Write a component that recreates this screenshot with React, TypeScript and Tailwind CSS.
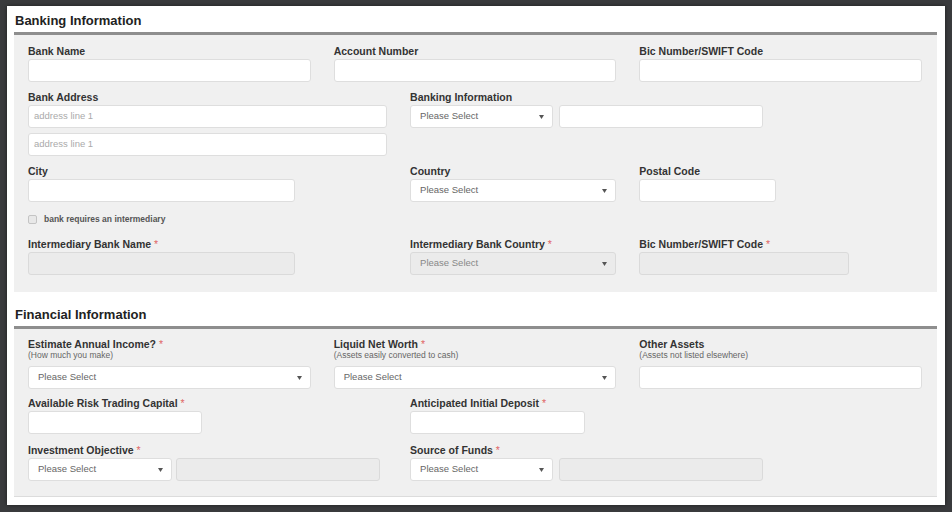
import React from "react";

function Label({ text, req, sub }: { text: string; req?: boolean; sub?: string }) {
  return (
    <div>
      <div className={sub ? "h-[12px] leading-[12px] text-[10.5px] font-bold text-[#333] whitespace-nowrap" : "h-[14px] leading-[14px] text-[10.5px] font-bold text-[#333] whitespace-nowrap"}>
        {text}
        {req && <span className="text-[#e06666] font-normal"> *</span>}
      </div>
      {sub && <div className="h-[11px] leading-[11px] text-[8.5px] text-[#666] whitespace-nowrap">{sub}</div>}
    </div>
  );
}

function Input({ w, disabled, placeholder }: { w?: string; disabled?: boolean; placeholder?: string }) {
  return (
    <div
      className={
        "h-[23px] rounded-[3px] border flex items-center pl-[5px] text-[9.5px] text-[#aaa] " +
        (disabled ? "bg-[#ebebeb] border-[#dadada] " : "bg-white border-[#dedede] ") +
        (w ?? "w-full")
      }
    >
      {placeholder}
    </div>
  );
}

function Select({ w, disabled }: { w?: string; disabled?: boolean }) {
  return (
    <div
      className={
        "h-[23px] rounded-[3px] border flex items-center justify-between pl-[9px] pr-[8px] text-[9.5px] " +
        (disabled ? "bg-[#ebebeb] border-[#dadada] text-[#888] " : "bg-white border-[#dedede] text-[#666] ") +
        (w ?? "w-full")
      }
    >
      <span>Please Select</span>
      <svg width="5" height="4" viewBox="0 0 5 4">
        <path d="M0 0 L5 0 L2.5 4 Z" fill="#555" />
      </svg>
    </div>
  );
}

function Heading({ text, top }: { text: string; top: string }) {
  return (
    <div>
      <div className={"pl-[1px] leading-[16px] text-[13px] font-bold text-[#222] " + top}>{text}</div>
      <div className="h-[3px] bg-[#8e8e8e]" />
    </div>
  );
}

export default function App() {
  return (
    <div className="w-[952px] h-[512px] overflow-hidden bg-[#3a3b3d] pt-[6px] pl-[7px] font-['Liberation_Sans',Arial,sans-serif]">
      <div className="w-[938px] h-[499px] bg-white pl-[7px] pr-[8px] shadow-[0_0_4px_rgba(0,0,0,0.5)]">
        <Heading text="Banking Information" top="pt-[7px] pb-[3px]" />
        <div className="bg-[#f0f0f0] pl-[14px] pr-[15px] pt-[9px] pb-[17px]">
          <div className="grid grid-cols-12 gap-x-[23px]">
            <div className="col-span-4">
              <Label text="Bank Name" />
              <div className="mt-[1px]"><Input /></div>
            </div>
            <div className="col-span-4">
              <Label text="Account Number" />
              <div className="mt-[1px]"><Input /></div>
            </div>
            <div className="col-span-4">
              <Label text="Bic Number/SWIFT Code" />
              <div className="mt-[1px]"><Input /></div>
            </div>
          </div>
          <div className="grid grid-cols-12 gap-x-[23px] mt-[8px]">
            <div className="col-span-5">
              <Label text="Bank Address" />
              <div className="mt-[1px]"><Input placeholder="address line 1" /></div>
              <div className="mt-[5px]"><Input placeholder="address line 1" /></div>
            </div>
            <div className="col-span-7">
              <Label text="Banking Information" />
              <div className="mt-[1px] flex gap-[6px]">
                <Select w="w-[143px]" />
                <Input w="w-[204px]" />
              </div>
            </div>
          </div>
          <div className="grid grid-cols-12 gap-x-[23px] mt-[8px]">
            <div className="col-span-5">
              <Label text="City" />
              <div className="mt-[1px]"><Input w="w-[267px]" /></div>
            </div>
            <div className="col-span-3">
              <Label text="Country" />
              <div className="mt-[1px]"><Select /></div>
            </div>
            <div className="col-span-4">
              <Label text="Postal Code" />
              <div className="mt-[1px]"><Input w="w-[137px]" /></div>
            </div>
          </div>
          <div className="mt-[10px] h-[14px] flex items-center gap-[7px]">
            <div className="w-[9px] h-[9px] rounded-[2px] border border-[#c4c4c4] bg-[#e8e8e8]" />
            <span className="text-[8.5px] font-bold text-[#555]">bank requires an intermediary</span>
          </div>
          <div className="grid grid-cols-12 gap-x-[23px] mt-[11px]">
            <div className="col-span-5">
              <Label text="Intermediary Bank Name" req />
              <div className="mt-[1px]"><Input w="w-[267px]" disabled /></div>
            </div>
            <div className="col-span-3">
              <Label text="Intermediary Bank Country" req />
              <div className="mt-[1px]"><Select disabled /></div>
            </div>
            <div className="col-span-4">
              <Label text="Bic Number/SWIFT Code" req />
              <div className="mt-[1px]"><Input w="w-[210px]" disabled /></div>
            </div>
          </div>
        </div>

        <Heading text="Financial Information" top="pt-[15px] pb-[3px]" />
        <div className="bg-[#f0f0f0] pl-[14px] pr-[15px] pt-[9px] pb-[15px] border-b border-[#dcdcdc]">
          <div className="grid grid-cols-12 gap-x-[23px]">
            <div className="col-span-4">
              <Label text="Estimate Annual Income?" req sub="(How much you make)" />
              <div className="mt-[5px]"><Select /></div>
            </div>
            <div className="col-span-4">
              <Label text="Liquid Net Worth" req sub="(Assets easily converted to cash)" />
              <div className="mt-[5px]"><Select /></div>
            </div>
            <div className="col-span-4">
              <Label text="Other Assets" sub="(Assets not listed elsewhere)" />
              <div className="mt-[5px]"><Input /></div>
            </div>
          </div>
          <div className="grid grid-cols-12 gap-x-[23px] mt-[7px]">
            <div className="col-span-5">
              <Label text="Available Risk Trading Capital" req />
              <div className="mt-[1px]"><Input w="w-[174px]" /></div>
            </div>
            <div className="col-span-7">
              <Label text="Anticipated Initial Deposit" req />
              <div className="mt-[1px]"><Input w="w-[175px]" /></div>
            </div>
          </div>
          <div className="grid grid-cols-12 gap-x-[23px] mt-[9px]">
            <div className="col-span-5">
              <Label text="Investment Objective" req />
              <div className="mt-[1px] flex gap-[4px]">
                <Select w="w-[144px]" />
                <Input w="w-[204px]" disabled />
              </div>
            </div>
            <div className="col-span-7">
              <Label text="Source of Funds" req />
              <div className="mt-[1px] flex gap-[6px]">
                <Select w="w-[143px]" />
                <Input w="w-[204px]" disabled />
              </div>
            </div>
          </div>
        </div>
      </div>
    </div>
  );
}
